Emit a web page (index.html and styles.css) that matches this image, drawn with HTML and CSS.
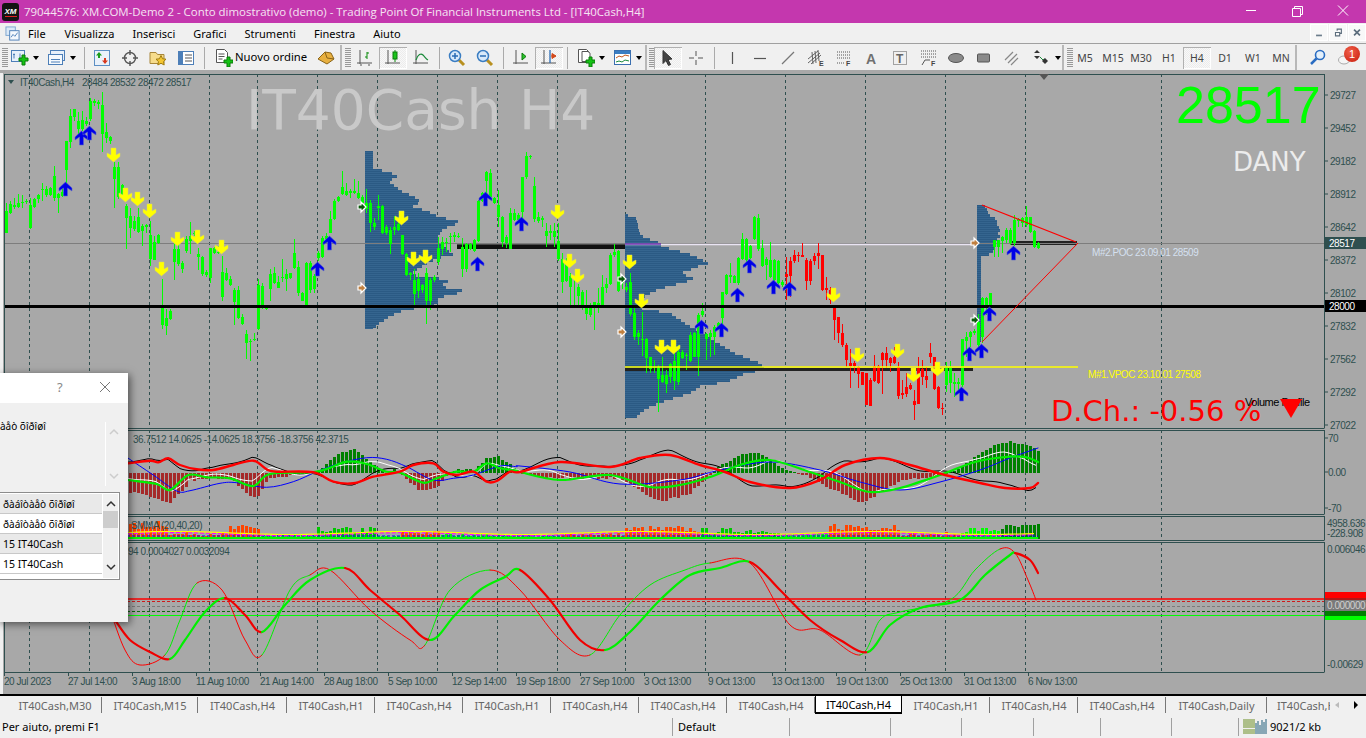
FILE: index.html
```html
<!DOCTYPE html>
<html lang="it">
<head>
<meta charset="utf-8">
<title>MetaTrader</title>
<link rel="stylesheet" href="styles.css">
</head>
<body>
<div class="app">
  <header class="titlebar">
    <div class="logo"><span>XM</span></div>
    <div class="title">79044576: XM.COM-Demo 2 - Conto dimostrativo (demo) - Trading Point Of Financial Instruments Ltd - [IT40Cash,H4]</div>
    <div class="winctl">
      <svg class="wbtn" viewBox="0 0 46 24"><path d="M18 10.500h10" stroke="#fff" fill="none"/></svg>
      <svg class="wbtn" viewBox="0 0 46 24"><path d="M18.500 8.500h8v8h-8zM20.500 8.500v-2h8v8h-2" stroke="#fff" fill="none"/></svg>
      <svg class="wbtn" viewBox="0 0 46 24"><path d="M18 5.500l10 10M28 5.500l-10 10" stroke="#fff" fill="none"/></svg>
    </div>
  </header>
  <nav class="menubar">
    <svg class="mdi-ic" viewBox="0 0 16 16"><rect x="1" y="1" width="10" height="9" fill="#dbe9f7" stroke="#7aa3cf"/><rect x="5" y="5" width="10" height="10" fill="#f4f8fd" stroke="#4d7fb8"/><path d="M6.500 12l2-3 2 2 3-4" stroke="#4d7fb8" fill="none"/></svg>
    <span class="menu m-file">File</span>
    <span class="menu m-vis">Visualizza</span>
    <span class="menu m-ins">Inserisci</span>
    <span class="menu m-gra">Grafici</span>
    <span class="menu m-str">Strumenti</span>
    <span class="menu m-fin">Finestra</span>
    <span class="menu">Aiuto</span>
    <div class="mdi">
      <span class="mdibtn"><svg viewBox="0 0 19 17"><path d="M6 12h7" stroke="#6c7d8c" stroke-width="2"/></svg></span>
      <span class="mdibtn"><svg viewBox="0 0 19 17"><path d="M6.500 8.500h5v4h-5zM8.500 6.500v-2h5v5h-2" stroke="#5c6d7c" stroke-width="1.300" fill="none"/></svg></span>
      <span class="mdibtn"><svg viewBox="0 0 19 17"><path d="M6 5l7 7M13 5l-7 7" stroke="#5c6d7c" stroke-width="2"/></svg></span>
    </div>
  </nav>
  <div class="toolbar">
    <i class="grip"></i>
    <span class="tb drop d36"><svg class="ic" viewBox="0 0 18 18"><rect x=".5" y="1.500" width="13" height="11" fill="#e7f0fa" stroke="#4d7fb8"/><path d="M3 4.500v5M2 5.500h2M9 4.500v5" stroke="#4d7fb8" fill="none"/><path d="M9 7h3v-3h3v3h3v3h-3v4h-3v-4h-3z" transform="translate(-1 2)" fill="#14c214" stroke="#0a7a0a"/></svg><b class="caret"></b></span>
    <span class="tb drop d38"><svg class="ic" viewBox="0 0 18 18"><rect x="2.500" y="1.500" width="14" height="10" fill="#e7f0fa" stroke="#4d7fb8"/><rect x=".5" y="5.500" width="14" height="10" fill="#f5f9fd" stroke="#4d7fb8"/><path d="M3 10.500h9M3 13h9" stroke="#4d7fb8"/></svg><b class="caret"></b></span>
    <i class="sep"></i>
    <span class="tb"><svg class="ic" viewBox="0 0 18 18"><rect x="1.500" y="1.500" width="15" height="15" fill="#e9f1fa" stroke="#5d8fc4"/><path d="M6 3l3 3.500H7v2.500H5V6.500H3z" fill="#1a9c1a"/><path d="M12 15l-3-3.500h2V9h2v2.500h2z" fill="#d9381e"/></svg></span>
    <span class="tb"><svg class="ic" viewBox="0 0 18 18"><circle cx="9" cy="9" r="5.500" fill="none" stroke="#555" stroke-width="1.400"/><path d="M9 1v5M9 12v5M1 9h5M12 9h5" stroke="#555" stroke-width="1.400"/></svg></span>
    <span class="tb"><svg class="ic" viewBox="0 0 18 18"><path d="M1 3.500h6l1.500 2H15v9H1z" fill="#f6dc8c" stroke="#a8873a"/><path d="M12 6.500l1.600 3.300 3.400.4-2.500 2.400.7 3.400-3.200-1.700-3.200 1.700.7-3.400L7 10.200l3.400-.4z" fill="#f3c531" stroke="#a07c10"/></svg></span>
    <span class="tb"><svg class="ic" viewBox="0 0 18 18"><rect x="1.500" y="2.500" width="15" height="13" fill="#fff" stroke="#4d7fb8"/><rect x="2" y="3" width="4" height="12" fill="#4d7fb8"/><path d="M8 6h7M8 9h7M8 12h7" stroke="#555"/></svg></span>
    <i class="sep"></i>
    <span class="tb order"><svg class="ic" viewBox="0 0 18 18"><path d="M1.500 .5h8l3 3v10h-11z" fill="#fff" stroke="#555"/><path d="M3.500 5h6M3.500 7.500h6M3.500 10h4" stroke="#555"/><path d="M9 11h3V8h3v3h3v3h-3v4h-3v-4H9z" fill="#14c214" stroke="#0a7a0a"/></svg><span class="ordertext">Nuovo ordine</span></span>
    <span class="tb"><svg class="ic" viewBox="0 0 18 18"><path d="M1 10l7-7 6 1 3 6-7 5z" fill="#e8b040" stroke="#8a6418"/><path d="M8 3l2 6 7 1" fill="none" stroke="#8a6418"/></svg></span>
    <i class="sepstrong"></i>
    <i class="grip g-s"></i>
    <span class="tb t-chart"><svg class="ic" viewBox="0 0 18 18"><path d="M4 1v14M1 14h15" stroke="#555" fill="none"/><path d="M11 3v7M11 4h2M9 8h2M2 13" stroke="#0a8a0a" fill="none"/><path d="M5 15v2M13 15v2" stroke="#555"/></svg></span>
    <span class="tb active"><svg class="ic" viewBox="0 0 18 18"><path d="M4 1v14M1 14h15" stroke="#555" fill="none"/><path d="M11 1v12" stroke="#0a8a0a"/><rect x="9" y="3" width="4" height="7" fill="#1bc41b" stroke="#0a7a0a"/></svg></span>
    <span class="tb"><svg class="ic" viewBox="0 0 18 18"><path d="M4 1v14M1 14h15" stroke="#555" fill="none"/><path d="M4 11c2-6 5-7 7-5s3 4 5 5" stroke="#1a8a3a" fill="none" stroke-width="1.200"/></svg></span>
    <i class="sep"></i>
    <span class="tb"><svg class="ic" viewBox="0 0 18 18"><path d="M11 11l5 5" stroke="#b89020" stroke-width="3"/><circle cx="7" cy="7" r="5.500" fill="#d7e9fa" stroke="#3a7dc2" stroke-width="1.500"/><path d="M4 7h6M7 4v6" stroke="#2a6cb5" stroke-width="1.500"/></svg></span>
    <span class="tb"><svg class="ic" viewBox="0 0 18 18"><path d="M11 11l5 5" stroke="#b89020" stroke-width="3"/><circle cx="7" cy="7" r="5.500" fill="#d7e9fa" stroke="#3a7dc2" stroke-width="1.500"/><path d="M4 7h6" stroke="#2a6cb5" stroke-width="1.500"/></svg></span>
    <i class="sep"></i>
    <span class="tb"><svg class="ic" viewBox="0 0 18 18"><path d="M4 1v14M1 14h15" stroke="#555" fill="none"/><path d="M10 4v7l4-3.500z" fill="#2cc42c" stroke="#0a7a0a"/></svg></span>
    <span class="tb active"><svg class="ic" viewBox="0 0 18 18"><path d="M4 1v14M1 14h15" stroke="#555" fill="none"/><path d="M10 1v13" stroke="#2a6cb5" stroke-width="1.300"/><path d="M16 7l-4-2.500v5zM11 7h5" fill="#d24a1c" stroke="#d24a1c"/></svg></span>
    <i class="sep"></i>
    <span class="tb drop d38"><svg class="ic" viewBox="0 0 18 18"><path d="M1.500 .5h8l3 3v10h-11z" fill="#fff" stroke="#555"/><path d="M5 2.500h6l2 2v8H5z" fill="#fff" stroke="#555"/><path d="M9 11h3V8h3v3h3v3h-3v4h-3v-4H9z" fill="#14c214" stroke="#0a7a0a"/></svg><b class="caret"></b></span>
    <span class="tb drop d36 d-tight"><svg class="ic" viewBox="0 0 18 18"><rect x=".5" y="1.500" width="16" height="14" fill="#fff" stroke="#3a6fb0"/><rect x="1" y="2" width="15" height="3" fill="#3a7dc2"/><path d="M2 9l3-2 3 1 3-2 4 1" stroke="#c2561c" fill="none"/><path d="M2 13l3-1 3 1 3-2 4 1" stroke="#1a8a3a" fill="none"/></svg><b class="caret"></b></span>
    <i class="sepstrong"></i>
    <i class="grip g-t"></i>
    <span class="tb active t-cur"><svg class="ic" viewBox="0 0 18 18"><path d="M4 1.500l9 8.500-4 .5 2.500 5-2 1-2.500-5L4 14.500z" fill="#444" stroke="#333"/></svg></span>
    <span class="tb"><svg class="ic" viewBox="0 0 18 18"><path d="M9 2v5M9 11v5M2 9h5M11 9h5" stroke="#555"/></svg></span>
    <i class="sep"></i>
    <span class="tb"><svg class="ic" viewBox="0 0 18 18"><path d="M9.500 3v12" stroke="#555" stroke-width="1.200"/></svg></span>
    <span class="tb"><svg class="ic" viewBox="0 0 18 18"><path d="M3 9.500h12" stroke="#555" stroke-width="1.200"/></svg></span>
    <span class="tb"><svg class="ic" viewBox="0 0 18 18"><path d="M3 15L15 3" stroke="#777" stroke-width="1.200"/></svg></span>
    <span class="tb"><svg class="ic" viewBox="0 0 18 18"><path d="M1 10l10-8M1 14l12-10M4 15l10-9M5 3l1 12M8 2l1 12M11 1l1 11" stroke="#555" fill="none" stroke-width=".9"/><text x="12" y="17" class="ictxt">E</text></svg></span>
    <span class="tb"><svg class="ic" viewBox="0 0 18 18"><path d="M2 3h13M2 6h13M2 9h13M2 14h8" stroke="#555" stroke-dasharray="1 1"/><text x="11" y="17" class="ictxt">F</text></svg></span>
    <span class="tb"><svg class="ic" viewBox="0 0 18 18"><text x="3" y="15" class="icA">A</text></svg></span>
    <span class="tb"><svg class="ic" viewBox="0 0 18 18"><rect x="2.500" y="2.500" width="13" height="13" fill="none" stroke="#555" stroke-dasharray="1 1"/><text x="5" y="14" class="icT">T</text></svg></span>
    <span class="tb"><svg class="ic" viewBox="0 0 18 18"><path d="M2 2h15M2 5h15M2 8h15" stroke="#555" stroke-dasharray="1 1"/><path d="M3 16l3-5h5" stroke="#555" fill="none"/><text x="12" y="17" class="ictxt">F</text></svg></span>
    <span class="tb"><svg class="ic" viewBox="0 0 18 18"><ellipse cx="9" cy="9" rx="7.500" ry="4.500" fill="#8a8a8a" stroke="#555"/></svg></span>
    <span class="tb"><svg class="ic" viewBox="0 0 18 18"><rect x="2.500" y="5" width="12" height="8" rx="1" fill="#8a8a8a" stroke="#555"/></svg></span>
    <span class="tb"><svg class="ic" viewBox="0 0 18 18"><path d="M2 11l8-8M5 14l9-9M8 16l7-7" stroke="#888" stroke-width="1.200"/></svg></span>
    <span class="tb drop d36 d-move"><svg class="ic" viewBox="0 0 18 18"><path d="M4 1l3 3H1zM4 10l3-3H1z" fill="#333"/><path d="M7 8l3 3 2-1" stroke="#1a8a3a" fill="none"/><path d="M12 9l3 3-3 3-3-3z" fill="#333"/></svg><b class="caret"></b></span>
    <i class="sepstrong"></i>
    <i class="grip g-f"></i>
    <span class="tf">M5</span><span class="tf">M15</span><span class="tf">M30</span><span class="tf">H1</span><span class="tf active">H4</span><span class="tf">D1</span><span class="tf">W1</span><span class="tf">MN</span>
    <i class="sepstrong s-end"></i>
    <span class="tb t-search"><svg class="ic" viewBox="0 0 18 18"><circle cx="11" cy="6" r="4.500" fill="#e4f0fb" stroke="#2a6cc2" stroke-width="1.600"/><path d="M7.500 9.500L2 15" stroke="#2a6cc2" stroke-width="2.500"/></svg></span>
    <span class="tb notif"><svg class="ic" viewBox="0 0 18 18"><ellipse cx="7" cy="11" rx="5.500" ry="4" fill="#f5f5f5" stroke="#aaa"/></svg><b class="badge">1</b></span>
  </div>
  <main class="chart"><svg id="chart" class="chartsvg" viewBox="0 0 1366 624" width="1366" height="624"></svg>
    <section class="dialog">
      <div class="dlg-title"><span class="dlg-q">?</span><svg class="dlg-x" viewBox="0 0 12 12"><path d="M1 1l10 10M11 1L1 11" stroke="#777" fill="none"/></svg></div>
      <div class="dlg-top"><p class="dlg-msg">àåò õîðîøî</p>
        <div class="dlg-scroll"><svg viewBox="0 0 10 7"><path d="M1 6l4-4 4 4" stroke="#ccc" stroke-width="1.500" fill="none"/></svg><svg viewBox="0 0 10 7"><path d="M1 1l4 4 4-4" stroke="#ccc" stroke-width="1.500" fill="none"/></svg></div>
      </div>
      <div class="dlg-list">
        <div class="rows">
          <div class="row alt cyr">ðàáîòàåò õîðîøî</div>
          <div class="row cyr">ðàáîòàåò õîðîøî</div>
          <div class="row alt">15 IT40Cash</div>
          <div class="row">15 IT40Cash</div>
        </div>
        <div class="lscroll"><svg viewBox="0 0 10 7"><path d="M1 6l4-4 4 4" stroke="#333" stroke-width="1.500" fill="none"/></svg><i class="thumb"></i><svg class="ls-down" viewBox="0 0 10 7"><path d="M1 1l4 4 4-4" stroke="#333" stroke-width="1.500" fill="none"/></svg></div>
      </div>
    </section>
  </main>
  <div class="tabs">
    <span class="tab t0">IT40Cash,M30</span><span class="tab t1">IT40Cash,M15</span><span class="tab t2">IT40Cash,H4</span><span class="tab">IT40Cash,H1</span><span class="tab">IT40Cash,H4</span><span class="tab">IT40Cash,H1</span><span class="tab">IT40Cash,H4</span><span class="tab">IT40Cash,H4</span><span class="tab">IT40Cash,H4</span><span class="tab cur">IT40Cash,H4</span><span class="tab">IT40Cash,H1</span><span class="tab">IT40Cash,H4</span><span class="tab">IT40Cash,H4</span><span class="tab t-daily">IT40Cash,Daily</span><span class="tab t-cut">IT40Cash,H4</span>
    <span class="tabnav"><b class="tl"></b><b class="tr"></b></span>
  </div>
  <footer class="status">
    <span class="st st-help">Per aiuto, premi F1</span>
    <span class="st st-def">Default</span>
    <span class="st st-a"></span><span class="st st-b"></span><span class="st st-c"></span><span class="st st-d"></span><span class="st st-e"></span><span class="st st-f"></span>
    <span class="st st-mem"><svg class="meter" viewBox="0 0 24 16"><path d="M1 0v15M3 0v15M5 0v15M7 0v15M9 0v15M11 0v15" stroke="#6b8e23" fill="none" stroke-dasharray="9 1"/><path d="M13 4v11M15 2v13M17 6v9M19 1v14M21 3v12M23 0v15" stroke="#1e5f7a" fill="none"/></svg>9021/2 kb</span>
  </footer>
</div>
<script src="chart.js"></script>
</body>
</html>
```
FILE: styles.css
```css
*{box-sizing:border-box}
html,body{margin:0;padding:0;overflow:hidden;background:#f0f0f0}
body{font-family:"Noto Sans","Liberation Sans",sans-serif;font-size:11px;color:#000}
.app{width:1366px;height:738px;display:flex;flex-direction:column}
.titlebar{height:23px;background:#c437ae;display:flex;align-items:center;flex:none}
.logo{width:17px;height:18px;margin:0 5px 0 2px;background:#141414;border-radius:3px;display:flex;align-items:center;justify-content:center}
.logo span{color:#fff;font:italic bold 8px "Liberation Sans",sans-serif;border-bottom:1px solid #d22}
.title{color:#f6e4f3;font:11.450px "Open Sans",sans-serif;white-space:nowrap;flex:1}
.winctl{display:flex;height:23px}
.wbtn{width:46px;height:24px;display:block}
.menubar{height:21px;display:flex;align-items:center;flex:none;background:#f0f0f0;border-bottom:1px solid #a0a0a0;padding-left:5px}
.mdi-ic{width:15px;height:15px;margin-right:8px}
.menu{font-size:11px;margin-right:18px;white-space:nowrap}
.m-file{margin-right:19px}
.mdi{margin-left:auto;display:flex;gap:0;align-self:flex-start;margin-top:1px}
.mdibtn{width:18px;height:17px;margin-left:1px;background:#f8f8f8;border:1px solid #fff}
.mdibtn svg{display:block;width:100%;height:100%}
.toolbar{height:26px;display:flex;align-items:center;flex:none;background:#f0f0f0;padding-top:1px}
.grip{width:6px;height:20px;margin-left:2px;margin-right:-2px;background:repeating-linear-gradient(#999 0 1px,#f0f0f0 1px 2px)}
.g-s{width:6px;margin-left:2px;margin-right:0}
.g-t{margin-left:1px;margin-right:-1px}
.g-f{margin-left:2px;margin-right:-2px}
.sep{width:8px;height:22px;background:linear-gradient(#aaa,#aaa) center/1px 100% no-repeat}
.sepstrong{width:2px;height:26px;background:#b8b8b8;margin:0 1px 0 0}
.s-end{margin:0 7px 0 0}
.tb{width:28px;height:22px;display:flex;align-items:center;justify-content:center;flex:none;position:relative}
.ic{width:18px;height:18px;display:block;flex:none}
.active{background:repeating-conic-gradient(#f8f8f8 0 25%,#ececec 0 50%) 0 0/2px 2px;box-shadow:inset 1px 1px 0 #b0b0b0,inset -1px -1px 0 #fff}
.drop{justify-content:flex-start;padding-left:5px}
.d36{width:36px}
.d38{width:38px;padding-left:6px}
.d-tight{padding-left:5px}
.d-move{width:36px;padding-left:7px}
.caret{width:0;height:0;border:3px solid transparent;border-top:4px solid #000;border-bottom:0;margin-left:4px}
.order{width:104px;justify-content:flex-start;padding-left:7px}
.ordertext{margin-left:2px;white-space:nowrap;position:relative;top:-1px;font-size:11.300px}
.tf{width:28px;height:22px;display:flex;align-items:center;justify-content:center;font-size:10.500px;color:#444;flex:none}
.t-search{width:28px}
.notif .badge{position:absolute;left:12px;top:-1px;width:16px;height:16px;border-radius:50%;background:radial-gradient(circle at 40% 35%,#f0604a,#c81a0a);color:#fff;font:11px/16px "Liberation Sans",sans-serif;text-align:center}
.ictxt{font:bold 7px "Liberation Sans",sans-serif;fill:#444}
.icA{font:bold 14px "Liberation Sans",sans-serif;fill:#707070}
.icT{font:bold 12px "Liberation Sans",sans-serif;fill:#666}
.chart{height:624px;flex:none;position:relative;overflow:hidden;background:#a8a8a8}
.chartsvg{display:block}
.tabs{height:22px;display:flex;flex:none;align-items:flex-start;position:relative;background:#f0f0f0;border-top:2px solid #000;color:#666;overflow:hidden}
.tab{width:88px;height:18px;display:flex;align-items:center;justify-content:center;font-size:11px;white-space:nowrap;position:relative;flex:none}
.tab::after{content:"";position:absolute;right:0;top:1px;bottom:1px;width:1px;background:#777}
.t0{width:102px;padding-left:8px}
.t1{width:96px}
.t2{width:89px}
.t-daily{width:101px}
.cur{background:#fff;color:#000;border:1px solid #000;border-top:0;border-bottom:2px solid #000;width:87px}
.cur::after{display:none}
.t-cut{width:99px;justify-content:flex-start;padding-left:10px;overflow:hidden}
.t-cut::after{display:none}
.tabnav{position:absolute;right:0;top:0;width:36px;height:18px;background:#f0f0f0;display:flex;align-items:center;justify-content:flex-end;gap:15px;padding-right:8px}
.tl{border:3px solid transparent;border-right:4px solid #bbb;border-left:0}
.tr{border:4px solid transparent;border-left:4px solid #000;border-right:0}
.status{height:21px;display:flex;flex:none;align-items:center;background:#f0f0f0}
.st{height:18px;border-left:1px solid #a0a0a0;white-space:nowrap;display:flex;align-items:center;flex:none}
.st-help{width:672px;border-left:0;padding-left:2px}
.st-def{width:117px;padding-left:5px}
.st-a{width:101px}.st-b{width:71px}.st-c{width:72px}.st-d{width:67px}.st-e{width:71px}.st-f{width:67px}
.st-mem{padding-left:4px;flex:1}
.meter{width:24px;height:16px;margin-right:3px}
.dialog{position:absolute;left:-2px;top:303px;width:130px;height:249px;background:#f0f0f0;box-shadow:2px 2px 8px rgba(0,0,0,.55);display:flex;flex-direction:column;font-size:10.500px}
.dlg-title{height:30px;background:#fff;position:relative;flex:none}
.dlg-q{position:absolute;left:59px;top:5px;color:#888;font-size:13px}
.dlg-x{position:absolute;left:101px;top:8px;width:12px;height:12px}
.dlg-top{height:89px;display:flex;flex:none;justify-content:space-between}
.dlg-msg{margin:16px 0 0 2px;font-size:10px;line-height:14px}
.dlg-scroll{width:16px;margin:19px 7px 0 0;height:64px;border-left:1px solid #fff;display:flex;flex-direction:column;justify-content:space-between;align-items:center;padding:6px 0}
.dlg-scroll svg{width:10px;height:7px}
.dlg-list{width:122px;height:88px;border:1px solid #8c8c8c;display:flex;background:#fff;padding:1px;flex:none}
.rows{flex:1;min-width:0}
.row{height:20px;font-size:10.500px;line-height:21px;padding-left:3px;white-space:nowrap;border-bottom:1px solid #c8c8c8;overflow:hidden}
.cyr{font-size:10px}
.alt{background:#e9e9e9}
.lscroll{width:16px;background:#f0f0f0;border-left:1px solid #fff;display:flex;flex-direction:column;align-items:center;padding-top:6px}
.lscroll svg{width:10px;height:7px;flex:none}
.thumb{width:15px;height:17px;background:#cdcdcd;margin-top:4px}
.ls-down{margin-top:36px}
.t{font:10px "Liberation Sans",sans-serif;fill:#2f4f4f;letter-spacing:-.45px}
.tw{fill:#fff}
.big{letter-spacing:0}
.bigname{font:55px "DejaVu Sans",sans-serif;fill:#c9c9c9}
.bigprice{font:52px "Liberation Sans",sans-serif;fill:#00ff00}
.dany{font:26px "DejaVu Sans",sans-serif;fill:#ececec}
.dch{font:29px "DejaVu Sans",sans-serif;fill:#ff0000}
.vpoc{fill:#ffff00}
.poc{fill:#d5e0f0}
.vol{font-size:11px;fill:#000}
```
FILE: chart.js
```javascript
const svg = document.getElementById('chart');
const OY = 70; // page y of svg top
let out = '';
const y = v => +(v - OY).toFixed(1);
const rect = (x, t, w, h, f) => { out += `<rect x="${x}" y="${y(t)}" width="${w}" height="${h}" fill="${f}"/>`; };
const line = (x1, y1, x2, y2, c, sw = 1, dash = '') => { out += `<line x1="${x1}" y1="${y(y1)}" x2="${x2}" y2="${y(y2)}" stroke="${c}" stroke-width="${sw}"${dash ? ` stroke-dasharray="${dash}"` : ''}/>`; };
const text = (x, yy, s, cls = 't', extra = '') => { out += `<text x="${x}" y="${y(yy)}" class="${cls}" ${extra}>${s}</text>`; };
const FR = '#2f4f4f';
function curve(pts, c, sw, prev, next) {
  let d = `M${pts[0][0]} ${y(pts[0][1])}`;
  for (let i = 0; i < pts.length - 1; i++) {
    const p0 = pts[i - 1] || prev || pts[i], p1 = pts[i], p2 = pts[i + 1], p3 = pts[i + 2] || next || p2;
    const c1x = p1[0] + (p2[0] - p0[0]) / 6, c1y = p1[1] + (p2[1] - p0[1]) / 6;
    const c2x = p2[0] - (p3[0] - p1[0]) / 6, c2y = p2[1] - (p3[1] - p1[1]) / 6;
    d += `C${c1x.toFixed(1)} ${y(c1y)} ${c2x.toFixed(1)} ${y(c2y)} ${p2[0]} ${y(p2[1])}`;
  }
  out += `<path d="${d}" fill="none" stroke="${c}" stroke-width="${sw}" stroke-linejoin="round" stroke-linecap="round"/>`;
}
function chain(segs, cr, cg, sw) {
  segs.forEach((s, i) => {
    const a = segs[i - 1], b = segs[i + 1];
    curve(s[1], s[0] === 'r' ? cr : cg, sw, a ? a[1][a[1].length - 2] : null, b ? b[1][1] : null);
  });
}
const lerp = (pts, x) => {
  if (x <= pts[0][0]) return pts[0][1];
  for (let i = 0; i < pts.length - 1; i++) if (x <= pts[i + 1][0]) {
    const t = (x - pts[i][0]) / (pts[i + 1][0] - pts[i][0]);
    return pts[i][1] + t * (pts[i + 1][1] - pts[i][1]);
  }
  return pts[pts.length - 1][1];
};
let seed = 7;
const rnd = () => (seed = (seed * 16807) % 2147483647) / 2147483647;

/* frames */
const panes = [[74, 428], [430, 514], [516, 540], [542, 672]];
const GRID = [29, 89, 149, 209, 257, 317, 377, 437, 497, 557, 625, 705, 785, 865, 945, 1025, 1161];
out += `<rect x="0" y="0" width="1366" height="624" fill="#a8a8a8"/>`;
rect(0, 70, 3, 624, '#f0f0f0');
rect(0, 70, 1366, 3, '#a8a8a8');
for (const [a, b] of panes) {
  for (const g of GRID) line(g + .5, a, g + .5, b, FR, 1, '3 3');
}

/* volume profiles */
function profile(x0, rows) {
  const t = Math.round(rows[0][0]), b = Math.round(rows[rows.length - 1][0]);
  for (let r = t; r < b; r++) {
    const w = lerp(rows, t + Math.floor((r - t) / 3) * 3) - x0;
    rect(x0, r, Math.round(w), 1, (r % 2) ? '#2b5a84' : '#35658f');
  }
}
const z9 = a => a.map(([zy, zx]) => [140 + zy / 3, 360 + zx / 3]);
profile(365, z9([[33, 38], [84, 38], [85, 52], [90, 85], [105, 110], [120, 85], [148, 122], [165, 160], [180, 182], [195, 160], [210, 205], [225, 232], [235, 275], [242, 302], [255, 270], [262, 250], [285, 235], [300, 232], [340, 280], [350, 232], [380, 175], [400, 150], [410, 235], [420, 265], [435, 240], [445, 300], [450, 315], [470, 232], [490, 235], [505, 135], [515, 110], [528, 85], [550, 52], [567, 38]]));
profile(625, [[214, 628], [216, 636], [234, 640], [238, 650], [242, 660], [245, 661], [250, 680], [254, 693], [258, 701], [262, 708], [265, 698], [272, 681], [277, 693], [280, 687], [285, 668], [290, 653], [297, 642], [307, 642], [312, 670], [325, 690], [330, 700], [340, 715], [352, 735], [358, 750], [362, 760], [368, 765], [372, 745], [380, 728], [385, 700], [392, 690], [398, 670], [405, 650], [412, 640], [418, 633]]);
profile(977, [[205, 985], [215, 990], [218, 997], [224, 997], [228, 1001], [232, 998], [236, 1000], [240, 994], [246, 994], [252, 992], [256, 981], [342, 981]]);

/* thin price line + POC bars */
rect(457, 243, 168, 6, '#111');
rect(457, 243, 168, 2, '#4a4a4a');
rect(625, 368, 348, 3, '#222');
rect(1010, 241, 67, 4, '#222');
line(5, 243.5, 1324, 243.5, '#7d7d7d');
line(625, 244.5, 975, 244.5, '#e9e4f2', 1.5);
line(625, 244, 661, 244, '#6a2fb0', 1.5);

/* candles: [bodyTop, bodyBot, wickTop, wickBot] in crop coordinates */
function candles(x0, oy, arr, col) {
  arr.forEach((c, i) => {
    const xx = x0 + i * 4;
    const f = v => Math.round(oy + v / 3);
    rect(xx, f(c[2]), 1, Math.max(1, f(c[3]) - f(c[2])), col);
    rect(xx - 1, f(c[0]), 3, Math.max(1, f(c[1]) - f(c[0])), col);
  });
}
const G = '#00ff00', R = '#ff0000';
candles(6, 76, [[405,470,380,470],[385,412,375,415],[388,394,365,400],[380,392,355,395],[378,382,358,395],[374,378,370,385],[388,455,365,460],[370,392,365,395],[358,370,355,380],[338,342,322,375],[338,358,330,362],[335,358,332,360],[300,365,270,375],[355,365,350,410],[348,360,335,362],[195,282,195,320],[120,198,100,215],[100,122,100,135],[135,160,108,180],[132,160,105,165],[135,145,122,150],[75,130,65,135],[75,80,68,90],[78,84,72,98],[88,173,48,228],[168,186,140,200],[183,196,180,205],[274,310,258,395],[274,362,258,368],[328,360,325,365],[390,426,385,520],[420,455,395,485],[434,458,420,465],[424,468,395,470],[450,466,445,510],[448,454,445,470],[478,550,435,570],[498,552,480,552],[478,500,475,505],[696,748,610,760],[726,750,700,776],[706,730,698,732],[520,558,490,612],[520,565,490,570],[562,580,555,592],[490,525,480,530],[480,495,438,535],[470,475,465,480],[535,542,515,582],[544,595,540,600],[588,598,582,603],[516,605,516,620],[516,532,512,535],[528,532,510,535],[588,662,540,675],[592,612,575,615],[610,628,600,630],[642,678,635,746],[642,726,630,730],[724,745,715,748],[775,800,762,850],[795,797,790,856],[790,793,770,795],[628,760,610,762],[630,688,620,700],[696,700,690,702],[593,640,580,675],[592,622,572,625],[618,636,600,636],[602,605,550,618],[594,610,580,645],[592,605,590,608],[532,575,490,580],[574,650,555,660],[650,675,648,676],[562,688,558,690],[562,642,555,650],[600,640,595,650],[532,545,525,555],[485,542,480,545],[480,490,472,500],[430,470,405,472],[376,430,370,432],[364,376,360,378],[334,354,285,358],[346,358,320,360],[346,350,340,365],[345,350,310,355],[352,366,315,370],[364,380,360,385],[380,400,340,405]], G);
candles(362, 140, [[170,190,165,200],[190,195,150,220],[190,250,180,275],[250,262,235,270],[198,204,165,240],[198,280,195,282],[260,280,255,285],[270,312,260,342],[262,270,228,285],[252,270,230,272],[285,342,285,345],[342,405,340,408],[398,405,395,420],[420,462,388,495],[416,452,400,475],[435,450,432,460],[400,482,385,552],[420,482,415,510],[410,420,405,425],[325,365,290,375],[305,328,290,345],[305,310,295,335],[288,292,278,335],[284,290,275,305],[288,292,278,295],[320,388,295,410],[312,388,310,395],[312,328,310,330],[300,332,298,335],[182,302,180,305],[160,182,155,185],[96,122,92,180],[100,172,88,175],[175,190,170,192],[195,232,150,260],[232,305,228,320],[292,308,285,325],[220,326,205,328],[220,240,208,242],[225,240,220,245],[112,215,110,240],[48,112,35,118],[48,52,46,58],[138,236,112,245],[232,244,215,250],[235,240,228,260],[274,288,250,322],[274,278,255,300],[274,292,250,320],[304,358,250,362],[356,425,340,458],[366,422,355,425],[408,440,400,495],[410,415,408,495],[442,468,432,495],[456,495,450,510],[505,522,450,540],[505,525,490,530],[486,495,485,570],[490,496,445,520],[442,495,405,497],[432,445,415,458],[345,432,340,435],[336,346,312,350],[332,452,330,455],[410,430,405,448],[440,450,430,455],[426,522,400,528],[520,590,495,600],[578,590,570,615],[598,600,515,648],[598,655,595,700],[652,688,650,700],[680,685,660,700],[680,717,675,815],[705,725,652,730],[706,732,690,760],[672,712,670,730],[664,722,640,750],[636,726,615,735],[636,655,630,656],[645,648,640,690],[585,662,575,665],[580,650,575,652],[525,650,520,708],[512,525,490,530],[582,596,580,660],[582,592,580,635],[560,592,555,645]], G);
candles(710, 200, [[400,412,390,470],[382,412,380,440],[370,385,365,390],[276,354,275,380],[225,282,222,285],[226,232,190,250],[228,248,225,250],[174,250,170,255],[118,176,100,180],[116,180,115,190],[138,174,135,178],[52,118,48,120],[54,148,42,152],[145,198,120,200],[178,194,170,240],[180,232,125,235],[180,240,178,260],[184,248,180,255],[245,256,240,262]], G);
candles(786, 200, [[222,232,170,300],[182,228,172,292],[165,182,150,188],[164,168,155,185],[166,170,128,172],[180,242,175,270],[182,242,178,255],[168,184,160,195],[160,168,130,208],[166,270,164,272],[265,270,232,300],[270,300,262,312],[322,360,322,420],[352,400,352,428],[400,436,372,440],[435,480,430,500],[490,498,448,565],[490,498,482,520],[500,522,498,565],[516,555,515,556],[520,615,518,616],[540,618,535,618],[498,542,465,545],[498,550,495,552],[458,480,455,582],[458,480,440,505],[474,488,472,515],[472,490,440,492],[500,588,485,598],[578,586,540,598],[560,582,520,592],[556,568,550,570],[603,615,570,660],[505,612,470,612],[508,530,480,555],[528,540,500,565],[460,470,428,490],[470,568,470,570],[560,624,558,628],[624,628,610,645]], R);
candles(946, 200, [[500,556,485,575],[500,550,482,578],[546,552,520,590],[546,552,535,570],[416,556,416,560],[412,422,395,470],[395,412,393,440],[392,398,388,405],[366,436,342,440],[295,412,290,430],[295,315,290,345],[280,315,278,345]], G);
candles(994, 190, [[150,172,150,200],[150,172,150,200],[142,152,138,188],[120,150,115,160],[120,160,115,165],[90,160,75,168],[88,92,85,110],[85,100,82,110],[82,105,48,110],[82,125,80,130],[122,172,120,175],[158,174,155,176]], G);

/* horizontal objects */
rect(5, 305, 1319, 3, '#000');
line(625, 367, 1078, 367, '#ffff00', 1.4);
line(982, 205, 1076, 242, '#ff0000', 1.2);
line(982, 342, 1078, 243, '#ff0000', 1);

/* arrows */
function up(cx, cy) {
  const d = `M${cx + .5} ${y(cy - 7)}l6.500 6v3l-4.500 -3v8h-4v-8l-4.500 3v-3z`;
  out += `<path d="${d}" fill="#0000e8" stroke="#5c64c8" stroke-width=".6"/>`;
}
function down(cx, cy) {
  const d = `M${cx - 2} ${y(cy - 7)}h5v7l4 -2v3.500l-6.500 5.500l-6.500 -5.500v-3.500l4 2z`;
  out += `<path d="${d}" fill="#ffff00" stroke="#d8d860" stroke-width=".5"/>`;
}
[[65,189],[81,138],[89,133],[317,269],[329,243],[485,199],[521,224],[477,264],[701,327],[721,330],[737,295],[749,266],[773,287],[789,289],[961,394],[969,354],[981,351],[989,314],[1013,253]].forEach(a => up(a[0], a[1]));
[[113,155],[125,195],[137,199],[149,211],[161,269],[177,239],[197,237],[221,247],[401,218],[413,259],[425,257],[557,212],[569,261],[577,276],[629,262],[641,301],[661,347],[673,347],[833,295],[857,355],[897,351],[913,375],[937,369]].forEach(a => down(a[0], a[1]));
function mark(cx, cy, c) {
  out += `<path d="M${cx - 4} ${y(cy - 2)}h3v-3l5 5l-5 5v-3h-3z" fill="${c}" stroke="#fff" stroke-width="1.200"/>`;
}
[[362,288,'#c08040'],[622,332,'#c08040'],[975,243,'#c08040'],[362,207,'#0a5a0a'],[622,279,'#0a5a0a'],[975,320,'#0a5a0a']].forEach(a => mark(a[0], a[1], a[2]));

/* pane 1 histogram + lines */
const hist = [[120,20],[140,20],[169,30],[185,15],[190,8],[205,5],[233,6],[245,20],[257,26],[265,10],[272,4],[317,0],[335,-18],[355,-24],[365,-15],[377,-5],[385,0],[395,-5],[403,3],[420,18],[437,15],[445,3],[455,-3],[475,-3],[485,-14],[497,-17],[510,-10],[520,0],[540,5],[620,5],[625,8],[650,25],[665,28],[690,20],[705,5],[720,-8],[745,-20],[760,-20],[780,-5],[800,0],[830,15],[860,30],[880,20],[900,8],[940,2],[960,-5],[990,-26],[1010,-31],[1030,-28],[1038,-22]];
for (let x = 122; x <= 1038; x += 4) {
  const v = Math.round(lerp(hist, x) + (rnd() - .5) * 2);
  if (v >= 0) rect(x - 1, 473, 3, Math.max(1, v), '#a52a2a');
  else rect(x - 1, 473 + v, 3, -v, '#008000');
}
const z10 = a => a.map(([px, py]) => [+(120 + px / 3).toFixed(1), +(430 + py / 3).toFixed(1)]);
const red = z10([[25,100],[90,92],[115,97],[145,85],[180,105],[230,118],[280,120],[340,105],[400,92],[440,118],[470,125],[580,127],[640,155],[700,160],[760,140],[840,125],[880,105],[940,100],[970,125],[1010,135],[1060,125],[1100,155],[1130,153],[1170,125]]).concat([[520,472],[560,462],[610,467],[640,458],[670,455],[700,465],[725,472],[750,482],[790,488],[820,480],[845,465],[880,458],[910,465],[945,475],[980,483],[1005,488],[1030,488],[1038,483]]);
const grn = z10([[25,150],[110,162],[150,180],[205,135],[260,142],[330,145],[400,168],[450,132],[590,125],[680,95],[740,102],[800,125],[840,128],[910,158],[950,145],[1010,125],[1060,125],[1100,100],[1140,115],[1190,122]]).concat([[520,472],[560,480],[610,475],[650,487],[680,485],[710,477],[740,465],[770,460],[810,472],[840,482],[870,492],[900,488],[940,475],[975,462],[1005,457],[1025,457],[1038,462]]);
const blu = z10([[25,85],[100,135],[170,183],[210,182],[300,160],[350,158],[440,172],[520,155],[590,125],[660,100],[740,83],[800,88],[860,110],[940,150],[1000,145],[1060,135],[1140,108],[1190,110]]).concat([[520,466],[570,472],[620,484],[680,480],[720,470],[770,462],[820,470],[860,482],[900,490],[940,482],[980,470],[1010,458],[1038,448]]);
const wob = (src, amp, col) => {
  const p = [];
  for (let x = 128; x <= 1036; x += 4) p.push(`${x},${y(lerp(src, x) + Math.sin(x / 9) * amp + Math.sin(x / 23) * amp * 1.5 - amp * .6)}`);
  out += `<polyline points="${p.join(' ')}" fill="none" stroke="${col}"/>`;
};
wob(red, 2, '#000');
wob(grn, 2.500, '#fff');
curve(blu, '#0000ff', 1);
curve(grn, '#00f000', 2.200);
curve(red, '#ff0000', 2.400);

/* pane 2 */
const env = [[120,150,15,'#ff4500'],[150,170,20,'#ff4500'],[170,230,6,'#ff4500'],[230,260,13,'#ff4500'],[260,317,4,'#00ff00'],[317,377,11,'#00c800'],[377,400,3,'#00ff00'],[400,440,8,'#ff4500'],[440,520,5,'#00ff00'],[520,560,3,'#00ff00'],[560,625,6,'#ff4500'],[625,700,12,'#ff4500'],[700,780,10,'#00c800'],[780,830,5,'#00ff00'],[830,900,15,'#ff4500'],[900,960,6,'#ff4500'],[960,1000,11,'#00ff00'],[1000,1039,14,'#008000']];
for (let x = 122; x <= 1038; x += 4) {
  const e = env.find(v => x >= v[0] && x < v[1]);
  const h = Math.max(1, Math.round(e[2] * (.55 + rnd() * .55)));
  rect(x - 1, 539 - h, 3, h, e[3]);
}
line(122, 538, 1038, 538, '#00ff00', 2);
line(122, 536, 1038, 536, '#0000ff', 1, '3 2');
const wave = (base, amp, col, dash, sw = 1) => {
  const p = [];
  for (let x = 122; x <= 1038; x += 8) p.push(`${x},${y(base + Math.sin(x / 37) * amp)}`);
  out += `<polyline points="${p.join(' ')}" fill="none" stroke="${col}" stroke-width="${sw}"${dash ? ` stroke-dasharray="${dash}"` : ''}/>`;
};
wave(534, 1.500, '#ff00ff', '4 2', 1.500);
wave(533, 1.500, '#ffff00', '', 1.200);

/* pane 3 */
line(112, 599, 1324, 599, '#ff0000', 1.500);
line(112, 601.500, 1324, 601.500, '#d01818', 1, '3 2');
line(112, 606.500, 1324, 606.500, '#7a7a7a', 1, '3 2');
line(112, 611.500, 1324, 611.500, '#0c6a0c', 1, '3 2');
line(112, 615.500, 1324, 615.500, '#00ff00', 1);
const thin = [['r',[[110,610],[125,650],[140,665],[165,655]]],['g',[[165,655],[180,620],[197,583]]],['r',[[197,583],[222,590],[245,640],[262,655]]],['g',[[262,655],[290,590],[310,575]]],['r',[[310,575],[330,570],[370,610],[410,640],[425,645]]],['g',[[425,645],[450,590],[490,570]]],['r',[[490,570],[520,590],[560,640],[590,655]]],['g',[[590,655],[620,615],[650,585],[685,570],[710,563]]],['r',[[710,563],[750,563],[790,625],[820,630],[860,655]]],['g',[[860,655],[880,620],[900,612],[950,600],[975,570],[1000,549]]],['r',[[1000,549],[1015,553],[1028,580],[1036,600]]]];
const thick = [['r',[[115,620],[130,640],[150,652],[170,659]]],['g',[[170,659],[185,640],[205,612],[225,598]]],['r',[[225,598],[245,615],[262,632]]],['g',[[262,632],[285,605],[310,580],[345,568]]],['r',[[345,568],[370,590],[400,615],[430,640]]],['g',[[430,640],[455,615],[480,590],[505,577],[520,570]]],['r',[[520,570],[550,600],[580,640],[605,650]]],['g',[[605,650],[630,632],[660,600],[690,575],[720,568],[750,562]]],['r',[[750,562],[780,590],[810,620],[840,640],[868,652]]],['g',[[868,652],[890,625],[920,608],[960,600],[985,575],[1010,555],[1015,553]]],['r',[[1015,553],[1030,560],[1038,573]]]];
chain(thin, '#ff0000', '#00f000', 1);
chain(thick, '#f00000', '#00f000', 2.200);

/* frames and scales */
for (const [a, b] of panes) {
  line(4.5, a + .5, 1324.5, a + .5, FR);
  line(4.5, b + .5, 1324.5, b + .5, FR);
  line(4.5, a, 4.5, b, FR);
  line(1324.5, a, 1324.5, b, FR);
}
[[29727,95],[29452,128],[29182,161],[28912,194],[28642,227],[28372,260],[28102,293],[27832,326],[27562,359],[27292,392],[27022,425]].forEach(([v, yy]) => {
  line(1325, yy, 1328, yy, FR);
  text(1330, yy + 3.500, v);
});
[['70',438],['0.00',472],['-70',508]].forEach(([v, yy]) => { line(1325, yy, 1328, yy, FR); text(1328, yy + 3.500, v); });
text(1327, 527, '4958.636');
text(1327, 537, '-228.908');
text(1327, 553, '0.006046');
rect(1325, 592, 41, 8, '#ff0000');
rect(1325, 598, 41, 3, '#b01818');
rect(1325, 600, 41, 11, '#7a7a7a');
text(1327, 609, '0.000000', 't', 'style="fill:#cfcfcf"');
rect(1325, 611, 41, 5, '#008000');
rect(1325, 616, 41, 4, '#00ff00');
text(1327, 668, '-0.00629');
rect(1325, 237, 41, 12, '#2f4f4f');
text(1329, 246.500, '28517', 't tw');
rect(1325, 300, 41, 12, '#000');
text(1329, 309.500, '28000', 't tw');
['20 Jul 2023','27 Jul 14:00','3 Aug 18:00','11 Aug 10:00','21 Aug 14:00','28 Aug 18:00','5 Sep 10:00','12 Sep 14:00','19 Sep 18:00','27 Sep 10:00','3 Oct 13:00','9 Oct 13:00','13 Oct 13:00','19 Oct 13:00','25 Oct 13:00','31 Oct 13:00','6 Nov 13:00'].forEach((s, i) => {
  const x = 4 + i * 64;
  line(x + .5, 672, x + .5, 676, FR);
  text(x, 685, s);
});
out += `<path d="M1039 ${y(74)}h10l-5 6z" fill="#555"/>`;
out += `<path d="M8 ${y(80)}h6l-3 4z" fill="#2f4f4f"/>`;
text(20, 86, 'IT40Cash,H4');
text(82, 86, '28484 28532 28472 28517');
text(133, 443, '36.7512 14.0625 -14.0625 18.3756 -18.3756 42.3715');
text(131, 529, 'SMMA (20,40,20)');
text(128, 555, '94 0.0004027 0.0032094');
text(246, 129, 'IT40Cash H4', 'big bigname');
text(1176, 123, '28517', 'big bigprice');
text(1233, 171, 'DANY', 'big dany');
text(1051, 421, 'D.Ch.: -0.56 %', 'big dch');
text(1245, 406, 'Volume Profile', 't vol');
out += `<path d="M1280 ${y(399)}h22l-11 19z" fill="#ff0000"/>`;
text(1092, 256, 'M#2.POC 23.09.01 28509', 't poc');
text(1088, 378, 'M#1.VPOC 23.10.01 27508', 't vpoc');
svg.innerHTML = out;
```
